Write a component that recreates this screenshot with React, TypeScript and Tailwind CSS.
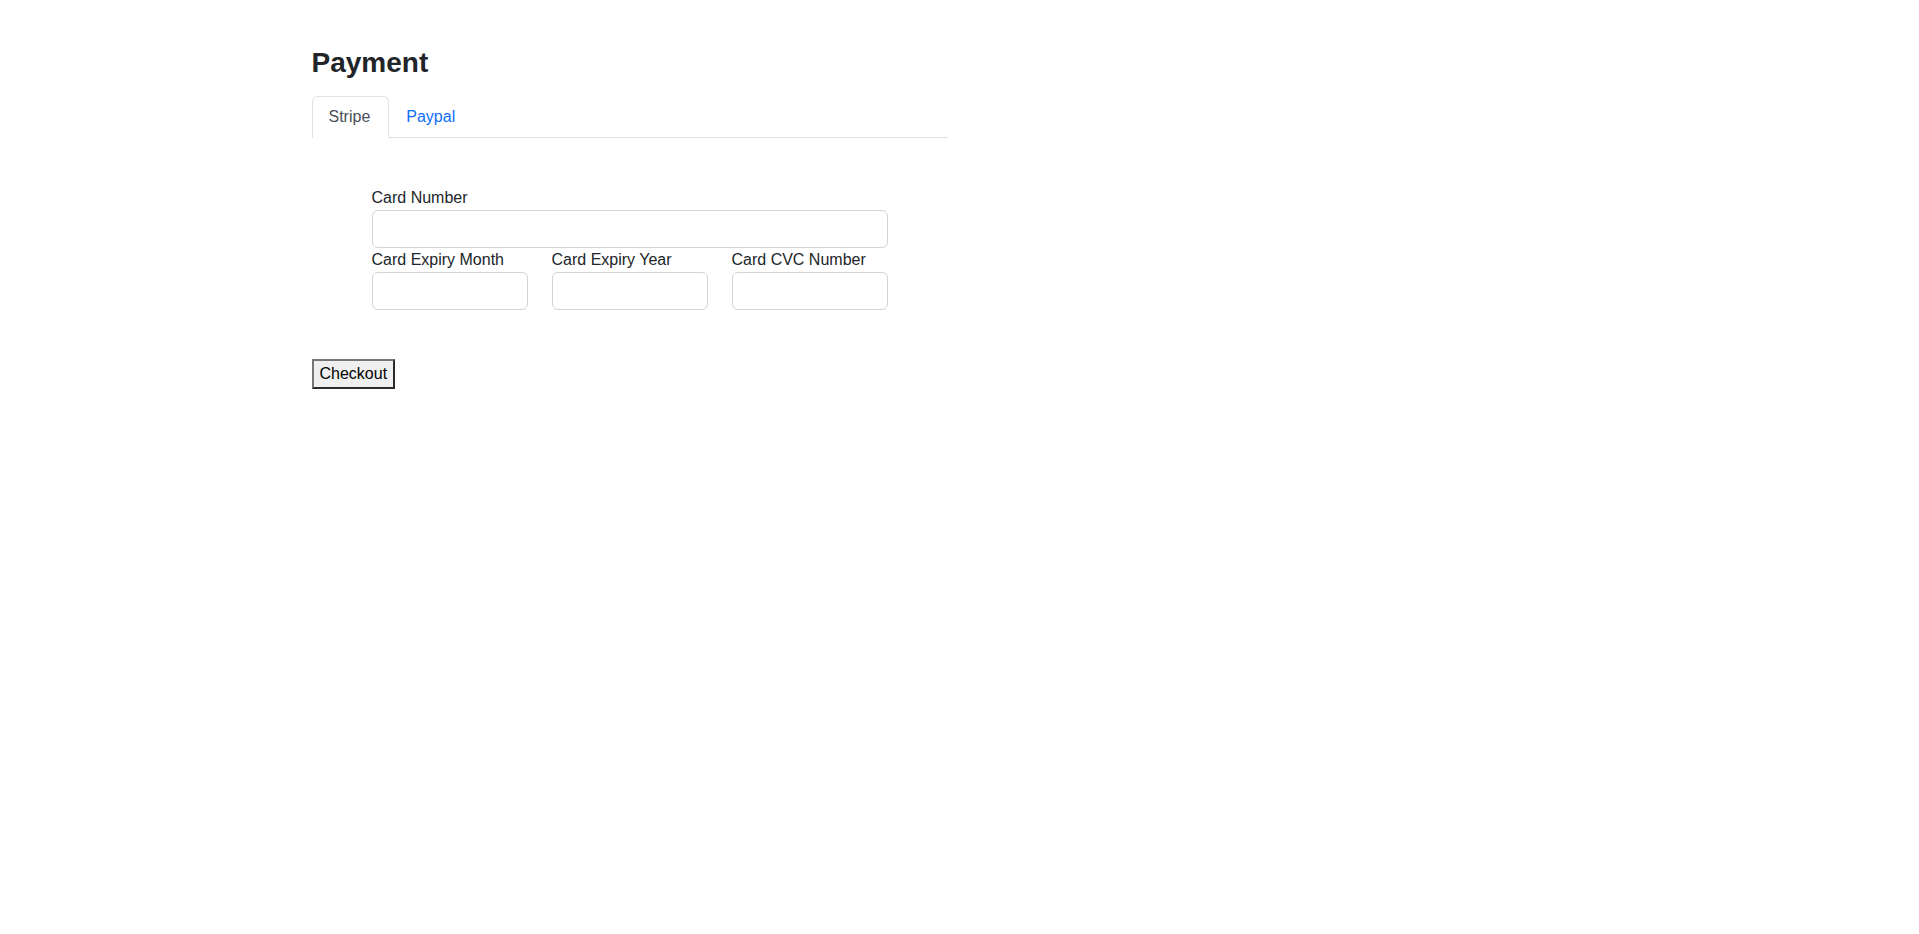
import { useState } from 'react';

const tabs = ['Stripe', 'Paypal'];

function Field({ label }: { label: string }) {
  return (
    <div className="flex flex-col">
      <label className="leading-6">{label}</label>
      <input
        type="text"
        className="h-[38px] w-full rounded-[6px] border border-[#ced4da] bg-white px-3 py-[6px] leading-6 outline-none"
      />
    </div>
  );
}

export default function App() {
  const [active, setActive] = useState('Stripe');

  return (
    <div className="min-h-screen bg-white text-[#212529] text-base font-['Liberation_Sans',Arial,sans-serif]">
      <div className="mx-auto w-[1320px] px-3 pt-[46px]">
        <div className="w-[636px]">
          <h3 className="mb-4 text-[28px] font-semibold leading-[1.2]">Payment</h3>

          {/* Tabs */}
          <ul className="flex border-b border-[#dee2e6]">
            {tabs.map((t) => (
              <li key={t} className="-mb-px">
                <button
                  onClick={() => setActive(t)}
                  className={`rounded-t-[6px] border py-2 pl-4 pr-[18px] leading-6 ${
                    active === t
                      ? 'border-[#dee2e6] border-b-white bg-white text-[#495057]'
                      : 'border-transparent text-[#0d6efd]'
                  }`}
                >
                  {t}
                </button>
              </li>
            ))}
          </ul>

          {/* Card form */}
          <div className="px-[60px] pt-12">
            <Field label="Card Number" />
            <div className="grid grid-cols-3 gap-x-6">
              <Field label="Card Expiry Month" />
              <Field label="Card Expiry Year" />
              <Field label="Card CVC Number" />
            </div>
          </div>

          <button className="mt-[49px] border-2 border-t-[#767676] border-l-[#767676] border-r-[#2b2b2b] border-b-[#2b2b2b] bg-[#efefef] px-[6px] py-px leading-6 text-black">
            Checkout
          </button>
        </div>
      </div>
    </div>
  );
}
